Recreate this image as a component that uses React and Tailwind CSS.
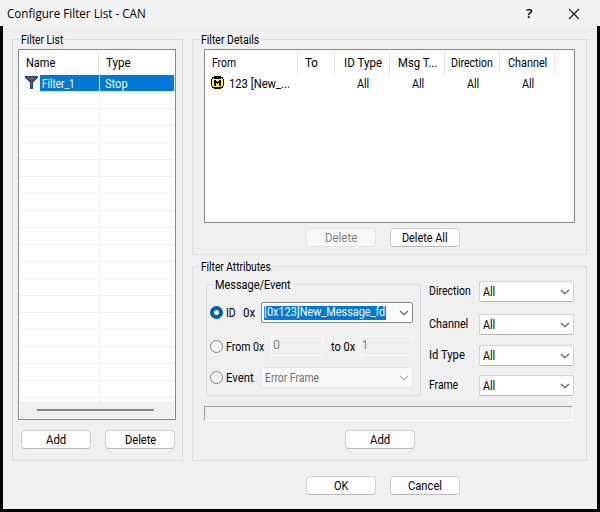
import { useLayoutEffect, useRef, useState } from "react";

// Text squeezed to the narrow advance widths of the classic dialog font.
function T({ w, className = "", children }) {
  const ref = useRef(null);
  const [scale, setScale] = useState(1);
  useLayoutEffect(() => {
    setScale(w / ref.current.offsetWidth);
  }, [w]);
  return (
    <span className={`block h-4 shrink-0 text-left leading-4 ${className}`} style={{ width: w }}>
      <span ref={ref} className="inline-block origin-left whitespace-pre" style={{ transform: `scaleX(${scale})` }}>
        {children}
      </span>
    </span>
  );
}

function Group({ title, w, className, children }) {
  return (
    <div className={`relative border border-[#dcdcdc] ${className}`}>
      <div className="absolute -top-[8px] left-[6px] bg-[#f0f0f0] px-[2px]">
        <T w={w}>{title}</T>
      </div>
      {children}
    </div>
  );
}

function Button({ w, disabled, className = "", children }) {
  return (
    <button
      className={`flex h-[19px] w-[70px] shrink-0 items-center justify-center rounded-[4px] border ${
        disabled ? "border-[#e7e7e7] bg-[#f8f8f8] text-[#838383]" : "border-[#d0d0d0] border-b-[#bababa] bg-[#fdfdfd]"
      } ${className}`}
    >
      <T w={w}>{children}</T>
    </button>
  );
}

function Chevron({ color }) {
  return (
    <svg width="10" height="6" viewBox="0 0 10 6" fill="none" stroke={color} strokeWidth="1.2" className="shrink-0">
      <path d="M1 1l4 3.6L9 1" />
    </svg>
  );
}

function SelectRow({ label, w, className = "" }) {
  return (
    <div className={`flex h-[21px] items-center ${className}`}>
      <div className="w-[50px] pb-[2px]">
        <T w={w}>{label}</T>
      </div>
      <div className="flex h-[21px] w-[95px] items-center justify-between rounded-[2px] border border-[#d2d2d2] border-b-[#b4b4b4] bg-[#fdfdfd] pr-[3px] pl-[3px]">
        <T w={12}>All</T>
        <Chevron color="#606060" />
      </div>
    </div>
  );
}

function Radio({ checked }) {
  return (
    <span
      className={`block size-[13px] shrink-0 rounded-full ${
        checked ? "border-4 border-[#005fb8] bg-white" : "border border-[#808080] bg-[#f3f3f3]"
      }`}
    />
  );
}

function FunnelIcon() {
  return (
    <svg width="13" height="13" viewBox="0 0 13 13" shapeRendering="crispEdges">
      <path d="M0 0h13v2h-1v1h-1v1h-1v1H9v1H8v7H5V6H4V5H3V4H2V3H1V2H0z" fill="#174a76" />
      <path d="M2 1h9v1h-1v1H9v1H8v1H5V4H4V3H3V2H2z" fill="#8c4265" />
      <path d="M6 6h1v6H6z" fill="#2e6687" />
    </svg>
  );
}

function MessageIcon() {
  return (
    <svg width="13" height="13" viewBox="0 0 13 13" shapeRendering="crispEdges">
      <path d="M3 0h7v1h2v2h1v7h-1v2h-2v1H3v-1H1v-2H0V3h1V1h2z" fill="#000" />
      <path d="M2 2h1v1h7V2h1v1h1v7h-1v1H2v-1H1V3h1z" fill="#ffff00" />
      <path d="M3 4h2v1h1v1h1V5h1V4h2v6H8V7H7v1H6V7H5v3H3z" fill="#000" />
    </svg>
  );
}

const ROWS = Array.from({ length: 20 }, (_, i) => i);

const COLUMNS = [
  { name: "From", w: 24, box: "w-[93px] pl-[7px]" },
  { name: "To", w: 13, box: "w-[37px] pl-[7px]" },
  { name: "ID Type", w: 38, box: "w-[55px] pl-[9px]" },
  { name: "Msg T...", w: 39, box: "w-[55px] pl-[8px]" },
  { name: "Direction", w: 42, box: "w-[55px] pl-[6px]" },
  { name: "Channel", w: 39, box: "w-[55px] pl-[8px]" },
];

function FilterList() {
  return (
    <Group title="Filter List" w={42} className="h-[422px] w-[171px]">
      <div className="mt-[9px] ml-[5px] h-[371px] w-[158px] border border-[#828790] bg-white px-px">
        <div className="flex h-[25px]">
          <div className="mt-px w-[79px] border-r border-[#e5e5e5] pt-[4px] pl-[6px]">
            <T w={29}>Name</T>
          </div>
          <div className="pt-[5px] pl-[7px]">
            <T w={25}>Type</T>
          </div>
        </div>
        <div className="h-[327px] overflow-hidden">
          {ROWS.map((row) => (
            <div key={row} className="flex h-[17px] border-b border-[#f0f0f0]">
              <div className="flex h-[17px] w-[80px] border-r border-[#f0f0f0]">
                {row === 0 && (
                  <>
                    <div className="w-[20px] pt-px pl-[5px]">
                      <FunnelIcon />
                    </div>
                    <div className="h-[16px] w-[59px] bg-[#0078d7] pt-px pl-[2px] text-white">
                      <T w={33}>Filter_1</T>
                    </div>
                  </>
                )}
              </div>
              {row === 0 && (
                <div className="h-[16px] flex-1 bg-[#0078d7] pt-px pl-[5px] text-white">
                  <T w={23}>Stop</T>
                </div>
              )}
            </div>
          ))}
        </div>
        <div className="flex h-[16px] items-center bg-[#f0f0f0] pl-[17px]">
          <div className="h-[2px] w-[117px] bg-[#858585]" />
        </div>
      </div>
      <div className="mt-[10px] ml-[8px] flex gap-[14px]">
        <Button w={20}>Add</Button>
        <Button w={31}>Delete</Button>
      </div>
    </Group>
  );
}

function FilterDetails() {
  return (
    <Group title="Filter Details" w={58} className="h-[216px]">
      <div className="mt-[9px] ml-[11px] h-[174px] w-[371px] border border-[#828790] bg-white">
        <div className="flex h-[25px] pt-px">
          {COLUMNS.map((c) => (
            <div key={c.name} className={`border-r border-[#e5e5e5] pt-[4px] ${c.box}`}>
              <T w={c.w}>{c.name}</T>
            </div>
          ))}
        </div>
        <div className="flex h-[18px] pt-px pl-[6px]">
          <MessageIcon />
          <div className="w-[127px] pl-[5px]">
            <T w={61}>123 [New_...</T>
          </div>
          {["ID Type", "Msg Type", "Direction", "Channel"].map((k) => (
            <div key={k} className="w-[55px] pl-[6px]">
              <T w={12}>All</T>
            </div>
          ))}
        </div>
      </div>
      <div className="mt-[5px] ml-[113px] flex gap-[14px]">
        <Button w={32} disabled>
          Delete
        </Button>
        <Button w={46}>Delete All</Button>
      </div>
    </Group>
  );
}

function MessageEvent() {
  return (
    <Group title="Message/Event" w={76} className="h-[112px] w-[215px] px-[3px]">
      <div className="mt-[17px] flex h-[21px] items-center">
        <Radio checked />
        <div className="ml-[3px] flex w-[35px] gap-[7px] pt-px">
          <T w={10}>ID</T>
          <T w={12}>0x</T>
        </div>
        <div className="flex h-[21px] w-[152px] items-center justify-between rounded-[2px] border border-[#868686] bg-white pr-[3px] pl-[2px]">
          <div className="h-[14px] w-[122px] bg-[#0078d7] text-white">
            <T w={121} className="-mt-[2px]">
              [0x123]New_Message_fd
            </T>
          </div>
          <Chevron color="#606060" />
        </div>
      </div>
      <div className="mt-[13px] flex h-[20px] items-center">
        <Radio />
        <div className="ml-[3px] w-[45px] pt-px">
          <T w={38}>From 0x</T>
        </div>
        <div className="h-[20px] w-[53px] border border-[#f9f9f9] pl-px text-[#838383]">
          <T w={7}>0</T>
        </div>
        <div className="ml-[7px] w-[29px] pt-px">
          <T w={24}>to 0x</T>
        </div>
        <div className="h-[20px] w-[53px] border border-[#f9f9f9] pl-px text-[#838383]">
          <T w={6}>1</T>
        </div>
      </div>
      <div className="mt-[11px] flex h-[21px] items-center">
        <Radio />
        <div className="ml-[3px] w-[35px] pt-px">
          <T w={28}>Event</T>
        </div>
        <div className="flex h-[21px] w-[152px] items-center justify-between rounded-[2px] border border-[#e8e8e8] bg-[#f9f9f9] pr-[3px] pl-[3px] text-[#707070]">
          <T w={54}>Error Frame</T>
          <Chevron color="#b4b4b4" />
        </div>
      </div>
    </Group>
  );
}

function FilterAttributes() {
  return (
    <Group title="Filter Attributes" w={70} className="mt-[11px] h-[195px]">
      <div className="flex pt-[14px]">
        <div className="mt-[3px] ml-[13px]">
          <MessageEvent />
        </div>
        <div className="ml-[8px]">
          <SelectRow label="Direction" w={42} />
          <SelectRow label="Channel" w={39} className="mt-[12px]" />
          <SelectRow label="Id Type" w={36} className="mt-[10px]" />
          <SelectRow label="Frame" w={29} className="mt-[9px]" />
        </div>
      </div>
      <div className="mt-[10px] ml-[11px] h-[15px] w-[369px] border border-t-[#a0a0a0] border-r-white border-b-white border-l-[#a0a0a0]" />
      <Button w={20} className="mt-[9px] ml-[152px]">
        Add
      </Button>
    </Group>
  );
}

export default function App() {
  return (
    <div className="flex h-[512px] w-[600px] flex-col overflow-hidden bg-black font-['Roboto','Liberation_Sans',sans-serif] text-[12.5px] text-black">
      <div className="flex h-[26px] items-center bg-[#f3f3f3] pt-px pl-[7px] font-['Open_Sans','Noto_Sans',sans-serif] text-[12px]">
        <T w={139}>Configure Filter List - CAN</T>
        <T w={6} className="ml-[380px] font-semibold">
          ?
        </T>
        <svg width="12" height="12" viewBox="0 0 12 12" stroke="#1a1a1a" strokeWidth="1.1" className="ml-[36px]">
          <path d="M1 1l10 10M11 1L1 11" />
        </svg>
      </div>
      <div className="mx-[3px] mb-[3px] flex-1 bg-[#f0f0f0] px-[9px] pt-[13px]">
        <div className="flex gap-[9px]">
          <FilterList />
          <div className="w-[395px]">
            <FilterDetails />
            <FilterAttributes />
          </div>
        </div>
        <div className="mt-[15px] ml-[294px] flex gap-[14px]">
          <Button w={14}>OK</Button>
          <Button w={34}>Cancel</Button>
        </div>
      </div>
    </div>
  );
}
